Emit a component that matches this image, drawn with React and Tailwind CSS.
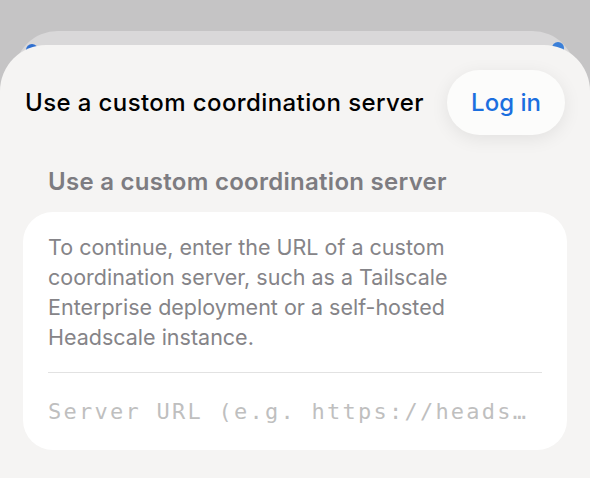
export default function App() {
  return (
    <div className="w-[590px] h-[478px] overflow-hidden bg-[#c5c4c5] pt-[31px] font-['Inter',sans-serif]">
      {/* sheet behind */}
      <div className="relative mx-[14px] rounded-t-[44px] bg-[#d9d8d9] pt-[14px]">
        <div className="absolute left-[12px] top-[13px] w-[12px] h-[12px] rounded-full bg-[#2f6fd0]" />
        <div className="absolute right-[12px] top-[11px] w-[12px] h-[12px] rounded-full bg-[#3a7fd8]" />

        {/* main sheet */}
        <div className="relative -mx-[14px] rounded-t-[46px] bg-[#f5f4f3] h-[440px]">
          <div className="flex items-center justify-between pl-[25px] pr-[25px] pt-[25px]">
            <h1 className="text-[24px] font-medium text-black tracking-[0.4px]">
              Use a custom coordination server
            </h1>
            <button className="w-[118px] h-[65px] rounded-full bg-[#fcfcfb] shadow-[0_4px_18px_rgba(0,0,0,0.08)] text-[24px] font-medium text-[#1b6fdf]">
              Log in
            </button>
          </div>

          <h2 className="pl-[48px] mt-[34px] text-[24px] leading-[26px] font-semibold text-[#7d7c81] tracking-[0.28px]">
            Use a custom coordination server
          </h2>

          <div className="mx-[23px] mt-[17px] rounded-[30px] bg-white px-[25px]">
            <p className="pt-[20px] text-[21.5px] leading-[30px] text-[#858488] whitespace-nowrap">
              To continue, enter the URL of a custom
              <br />
              coordination server, such as a Tailscale
              <br />
              Enterprise deployment or a self-hosted
              <br />
              Headscale instance.
            </p>
            <div className="mt-[20px] h-px bg-[#e2e2e2]" />
            <div className="h-[77px] flex items-center">
              <span className="font-['DejaVu_Sans_Mono',monospace] text-[22px] tracking-[2.25px] text-[#bfbfbf] whitespace-nowrap">
                Server URL (e.g. https://heads…
              </span>
            </div>
          </div>
        </div>
      </div>
    </div>
  );
}
